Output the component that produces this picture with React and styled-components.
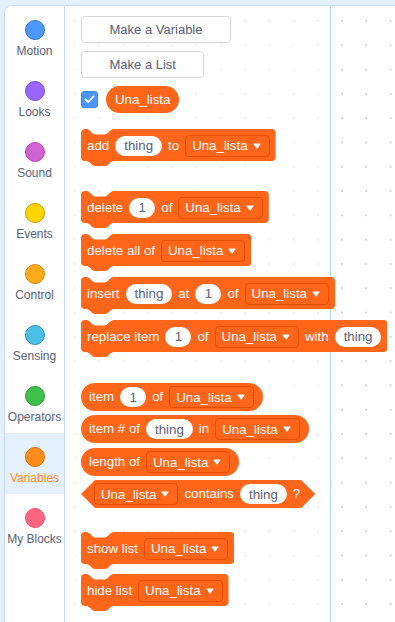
import React from "react";
import styled, { createGlobalStyle } from "styled-components";

const LINE = "#c6dbf6";
const LIST = "#ff661a";
const LIST_EDGE = "#e64d00";
const INK = "#575e75";
const BLOCK_FONT = "13.3px";

const GlobalStyle = createGlobalStyle`
  * { box-sizing: border-box; }
  html, body {
    margin: 0;
    padding: 0;
    background: #e5f0ff;
    overflow: hidden;
  }
  body {
    font-family: "Liberation Sans", Arial, sans-serif;
  }
`;

const categories = [
  { name: "Motion", fill: "#4c97ff", edge: "#3373cc" },
  { name: "Looks", fill: "#9966ff", edge: "#774dcb" },
  { name: "Sound", fill: "#cf63cf", edge: "#bd42bd" },
  { name: "Events", fill: "#ffd500", edge: "#cc9900" },
  { name: "Control", fill: "#ffab19", edge: "#cf8b17" },
  { name: "Sensing", fill: "#4cbfe6", edge: "#2e8eb8" },
  { name: "Operators", fill: "#40bf4a", edge: "#389438" },
  { name: "Variables", fill: "#ff8c1a", edge: "#db6e00", selected: true },
  { name: "My Blocks", fill: "#ff6680", edge: "#ff4d6a" },
];

// stack block outline: notch on top, bump below the 32px body
const stackClip = `polygon(
  0 3px, 1px 1px, 3px 0,
  6px 0, 8.5px 1.3px, 11.5px 4.2px, 14px 5.4px, 24px 5.4px, 26.5px 4.2px, 29.5px 1.3px, 32px 0,
  calc(100% - 3px) 0, calc(100% - 1px) 1px, 100% 3px,
  100% 29px, calc(100% - 1px) 31px, calc(100% - 3px) 32px,
  32px 32px, 29.5px 33.3px, 26.5px 36.2px, 24px 37px, 14px 37px, 11.5px 36.2px, 8.5px 33.3px, 6px 32px,
  3px 32px, 1px 31px, 0 29px
)`;

function Arrow() {
  return (
    <svg width="8" height="6" viewBox="0 0 8 6">
      <path d="M1 1 H7 L4 5 Z" fill="#fff" stroke="#fff" strokeWidth="1.2" strokeLinejoin="round" />
    </svg>
  );
}

function ListMenu() {
  return (
    <Dropdown>
      <span>Una_lista</span>
      <Arrow />
    </Dropdown>
  );
}

function Check() {
  return (
    <svg width="11" height="9" viewBox="0 0 11 9">
      <path d="M1.5 4.5 L4.2 7 L9.5 1.5" fill="none" stroke="#fff" strokeWidth="1.8" strokeLinecap="round" strokeLinejoin="round" />
    </svg>
  );
}

export default function App() {
  return (
    <>
      <GlobalStyle />
      <Page>
        <Main>
          <CategoryMenu>
            {categories.map((c) => (
              <CategoryItem key={c.name} $selected={c.selected}>
                <Bubble $fill={c.fill} $edge={c.edge} />
                <CategoryLabel $selected={c.selected}>{c.name}</CategoryLabel>
              </CategoryItem>
            ))}
          </CategoryMenu>

          <Flyout>
            <FlyoutButton>Make a Variable</FlyoutButton>
            <FlyoutButton>Make a List</FlyoutButton>
            <CheckRow>
              <CheckBox>
                <Check />
              </CheckBox>
              <VarReporter>Una_lista</VarReporter>
            </CheckRow>

            <StackBlock $gap={16}>
              <Label>add</Label>
              <TextInput>thing</TextInput>
              <Label>to</Label>
              <ListMenu />
            </StackBlock>

            <StackBlock $gap={25}>
              <Label>delete</Label>
              <TextInput>1</TextInput>
              <Label>of</Label>
              <ListMenu />
            </StackBlock>
            <StackBlock $gap={6}>
              <Label>delete all of</Label>
              <ListMenu />
            </StackBlock>
            <StackBlock $gap={6}>
              <Label>insert</Label>
              <TextInput>thing</TextInput>
              <Label>at</Label>
              <TextInput>1</TextInput>
              <Label>of</Label>
              <ListMenu />
            </StackBlock>
            <StackBlock $gap={6}>
              <Label>replace item</Label>
              <TextInput>1</TextInput>
              <Label>of</Label>
              <ListMenu />
              <Label>with</Label>
              <TextInput>thing</TextInput>
            </StackBlock>

            <Reporter $gap={26}>
              <Label>item</Label>
              <TextInput>1</TextInput>
              <Label>of</Label>
              <ListMenu />
            </Reporter>
            <Reporter $gap={4}>
              <Label>item # of</Label>
              <TextInput>thing</TextInput>
              <Label>in</Label>
              <ListMenu />
            </Reporter>
            <Reporter $gap={5}>
              <Label>length of</Label>
              <ListMenu />
            </Reporter>
            <BoolBlock $gap={4}>
              <ListMenu />
              <Label>contains</Label>
              <TextInput>thing</TextInput>
              <Label>?</Label>
            </BoolBlock>

            <StackBlock $gap={24}>
              <Label>show list</Label>
              <ListMenu />
            </StackBlock>
            <StackBlock $gap={5}>
              <Label>hide list</Label>
              <ListMenu />
            </StackBlock>
          </Flyout>

          <Workspace />
        </Main>
      </Page>
    </>
  );
}

const Page = styled.div`
  height: 622px;
  padding: 5px 0 0 4px;
  background: #e5f0ff;
  display: flex;
`;

const Main = styled.div`
  flex: 1;
  display: flex;
  border-top: 1px solid ${LINE};
  border-left: 1px solid ${LINE};
  border-top-left-radius: 8px;
  background: #fff;
  overflow: hidden;
`;

const CategoryMenu = styled.nav`
  width: 60px;
  flex-shrink: 0;
  display: flex;
  flex-direction: column;
  border-right: 1px solid ${LINE};
  background: #fff;
`;

const CategoryItem = styled.div`
  height: 61px;
  padding-top: 14px;
  display: flex;
  flex-direction: column;
  align-items: center;
  background: ${(p) => (p.$selected ? "#e5f0ff" : "transparent")};
`;

const Bubble = styled.div`
  width: 20px;
  height: 20px;
  border-radius: 50%;
  background: ${(p) => p.$fill};
  border: 1px solid ${(p) => p.$edge};
`;

const CategoryLabel = styled.span`
  margin-top: 4px;
  font-size: 12px;
  line-height: 14px;
  white-space: nowrap;
  color: ${(p) => (p.$selected ? "#ff8c1a" : INK)};
`;

const Flyout = styled.div`
  width: 266px;
  flex-shrink: 0;
  position: relative;
  z-index: 1;
  display: flex;
  flex-direction: column;
  align-items: flex-start;
  padding: 10px 0 0 16px;
  border-right: 1px solid #b3d4fc;
  background-color: #fff;
  background-image: radial-gradient(circle at 1px 1px, #eeeeee 1px, transparent 1.4px);
  background-size: 24.3px 24.3px;
  background-position: 9px 14px;
`;

const FlyoutButton = styled.div`
  height: 27px;
  padding: 0 27.5px;
  display: flex;
  align-items: center;
  border: 1px solid #d6d6d6;
  border-radius: 4px;
  background: #fff;
  color: ${INK};
  font-size: 13px;

  & + & {
    margin-top: 8px;
  }
`;

const CheckRow = styled.div`
  margin-top: 8px;
  display: flex;
  align-items: center;
  gap: 8px;
`;

const CheckBox = styled.div`
  width: 17px;
  height: 17px;
  border-radius: 3px;
  background: #4c97ff;
  border: 1px solid #3d82e6;
  display: flex;
  align-items: center;
  justify-content: center;
`;

const VarReporter = styled.div`
  height: 27px;
  padding: 0 9px;
  border-radius: 14px;
  display: flex;
  align-items: center;
  background: ${LIST};
  color: #fff;
  font-size: ${BLOCK_FONT};
`;

const StackBlock = styled.div`
  margin-top: ${(p) => p.$gap}px;
  height: 37px;
  padding: 1px 6px 5px;
  display: flex;
  align-items: center;
  gap: 6px;
  background: ${LIST};
  clip-path: ${stackClip};
  color: #fff;
  font-size: ${BLOCK_FONT};
  white-space: nowrap;
`;

const Reporter = styled.div`
  margin-top: ${(p) => p.$gap}px;
  height: 28px;
  padding: 0 9px 0 8px;
  border-radius: 14px;
  display: flex;
  align-items: center;
  gap: 6px;
  background: ${LIST};
  color: #fff;
  font-size: ${BLOCK_FONT};
  white-space: nowrap;
`;

const BoolBlock = styled(Reporter)`
  border-radius: 0;
  padding: 0 15px 0 13px;
  clip-path: polygon(0 50%, 14px 0, calc(100% - 14px) 0, 100% 50%, calc(100% - 14px) 100%, 14px 100%);
`;

const Label = styled.span`
  line-height: 16px;
`;

const TextInput = styled.span`
  height: 20px;
  min-width: 26px;
  padding: 0 9px;
  border-radius: 10px;
  display: flex;
  align-items: center;
  justify-content: center;
  background: #fff;
  color: ${INK};
  font-size: ${BLOCK_FONT};
`;

const Dropdown = styled.div`
  height: 22px;
  padding: 0 8px 0 6px;
  display: flex;
  align-items: center;
  gap: 5px;
  border: 1px solid ${LIST_EDGE};
  border-radius: 4px;
  background: ${LIST};
  color: #fff;
  font-size: ${BLOCK_FONT};
`;

const Workspace = styled.div`
  flex: 1;
  background-color: #fff;
  background-image: radial-gradient(circle at 1px 1px, #d4d4d4 1px, transparent 1.4px);
  background-size: 24.3px 24.3px;
  background-position: 10px 14px;
`;
